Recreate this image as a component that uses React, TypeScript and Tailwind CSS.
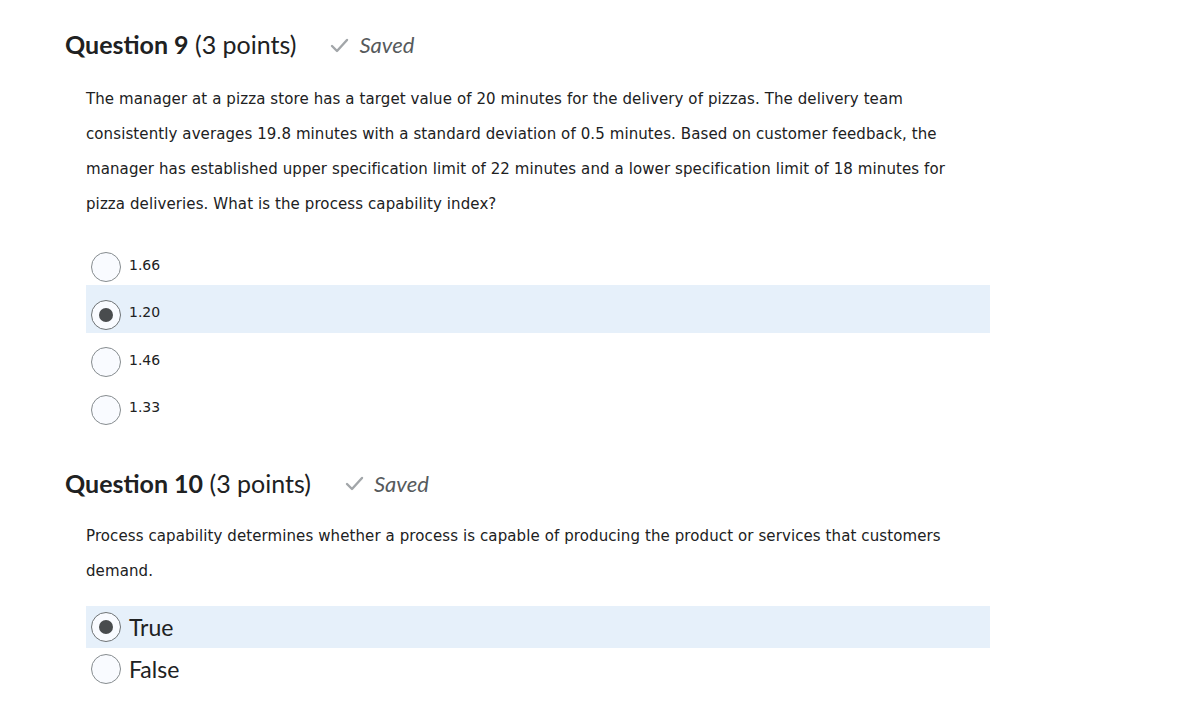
import React from "react";

type Opt = { label: string; selected?: boolean };

function Radio({ selected }: { selected?: boolean }) {
  return (
    <span
      className={`flex h-[30px] w-[30px] shrink-0 items-center justify-center rounded-full border bg-[#f9fbff] ${
        selected ? "border-[#6e7376]" : "border-[#868c8f]"
      }`}
    >
      {selected && <span className="h-[14px] w-[14px] rounded-full bg-[#494c4e]" />}
    </span>
  );
}

function Saved() {
  return (
    <span className="ml-[34px] flex items-center gap-[10px] text-[#565a5c]">
      <svg width="19" height="15" viewBox="0 0 19 15" className="mt-[1px]">
        <path d="M2 8 L7 13 L17 2" fill="none" stroke="#a2a6a9" strokeWidth="2.4" strokeLinecap="round" strokeLinejoin="round" />
      </svg>
      <span className="text-[22px] italic">Saved</span>
    </span>
  );
}

function Heading({ num }: { num: number }) {
  return (
    <div className="flex items-center font-['Lato',sans-serif] text-[#202122]">
      <h2 className="text-[25px]">
        <span className="font-bold">Question {num}</span> (3 points)
      </h2>
      <Saved />
    </div>
  );
}

function Options({ opts, big }: { opts: Opt[]; big?: boolean }) {
  return (
    <div className="flex w-[904px] flex-col">
      {opts.map((o) => (
        <div
          key={o.label}
          className={`flex gap-[8px] pl-[5px] ${big ? "h-[42px] items-center" : "h-[47.5px] items-end pb-[3px]"} ${
            o.selected ? "bg-[#e6f0fa]" : ""
          }`}
        >
          <Radio selected={o.selected} />
          <span
            className={
              big
                ? "font-['Lato',sans-serif] text-[23px] text-[#202122]"
                : "self-center pt-[11px] font-['DejaVu_Sans',sans-serif] text-[14px] text-[#202122]"
            }
          >
            {o.label}
          </span>
        </div>
      ))}
    </div>
  );
}

const para =
  "ml-[21px] w-[900px] font-['DejaVu_Sans',sans-serif] text-[15px] leading-[35px] tracking-[0.1px] text-[#202122]";

export default function App() {
  return (
    <div className="min-h-screen bg-white pl-[65px] pt-[26px]">
      <Heading num={9} />
      <p className={`${para} mt-[18px]`}>
        The manager at a pizza store has a target value of 20 minutes for the delivery of pizzas. The delivery team
        <br />
        consistently averages 19.8 minutes with a standard deviation of 0.5 minutes. Based on customer feedback, the
        <br />
        manager has established upper specification limit of 22 minutes and a lower specification limit of 18 minutes for
        <br />
        pizza deliveries. What is the process capability index?
      </p>
      <div className="ml-[21px] mt-[16px]">
        <Options opts={[{ label: "1.66" }, { label: "1.20", selected: true }, { label: "1.46" }, { label: "1.33" }]} />
      </div>
      <div className="mt-[37px]">
        <Heading num={10} />
      </div>
      <p className={`${para} mt-[17px]`}>
        Process capability determines whether a process is capable of producing the product or services that customers
        <br />
        demand.
      </p>
      <div className="ml-[21px] mt-[17px]">
        <Options big opts={[{ label: "True", selected: true }, { label: "False" }]} />
      </div>
    </div>
  );
}
